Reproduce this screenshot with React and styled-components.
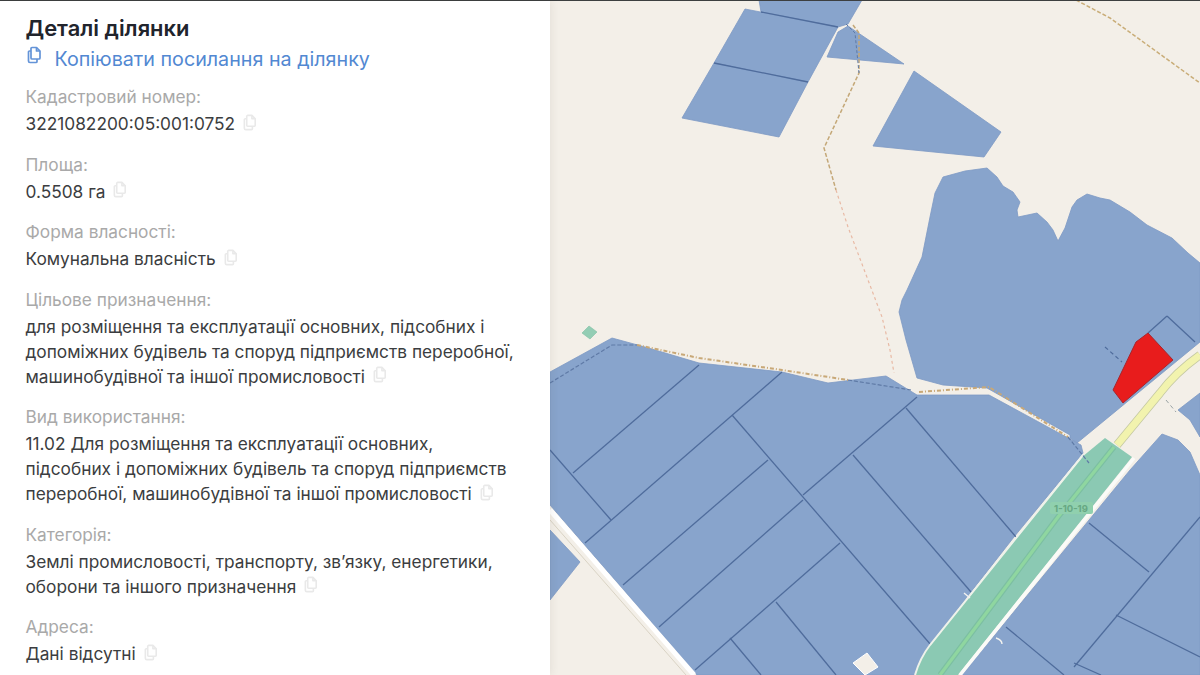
import React from 'react'
import styled, { createGlobalStyle } from 'styled-components'

const GlobalStyle = createGlobalStyle`
  html, body {
    margin: 0;
    padding: 0;
    background: #fff;
  }
  body {
    font-family: Inter, "Noto Sans", sans-serif;
  }
`

const Page = styled.div`
  width: 1200px;
  height: 675px;
  display: flex;
  flex-direction: column;
  overflow: hidden;
`

const TopRule = styled.div`
  height: 1px;
  flex: none;
  background: #3c3f40;
`

const Body = styled.div`
  flex: 1;
  min-height: 0;
  display: flex;
`

const Panel = styled.aside`
  width: 550px;
  flex: none;
  box-sizing: border-box;
  padding: 14px 20px 0 25.5px;
  background: #fff;
  overflow: hidden;
  position: relative;
  box-shadow: 0 0 9px rgba(60, 50, 40, 0.1);
`

const Title = styled.h1`
  margin: 0 0 5px;
  font-size: 21.9px;
  line-height: 26px;
  font-weight: 600;
  color: #21242c;
`

const CopyLink = styled.a`
  display: flex;
  align-items: flex-start;
  gap: 11px;
  margin-bottom: 12px;
  font-size: 19.7px;
  line-height: 26px;
  color: #5288d2;
`

const Group = styled.div`
  margin-bottom: 15.5px;
`

const Label = styled.div`
  margin-bottom: 2px;
  font-size: 17.3px;
  line-height: 25px;
  color: #a9a9a9;
`

const Value = styled.div`
  font-size: 17.3px;
  line-height: 25px;
  color: #3b3d40;
  white-space: nowrap;
`

const Map = styled.main`
  flex: 1;
  background: #f3efe8;
  overflow: hidden;

  svg {
    display: block;
  }
`

const CopyGlyph = styled.svg`
  flex: none;
  display: inline-block;
  vertical-align: ${(p) => (p.$link ? '0' : 'middle')};
  margin: ${(p) => (p.$link ? '0' : '-9px 0 -3px 7px')};
  color: ${(p) => (p.$link ? '#6494d8' : '#e9e9e9')};
`

const CopyIcon = ({ link }) => (
  <CopyGlyph
    $link={link}
    width={link ? 18 : 17}
    height={link ? 18 : 17}
    viewBox="0 0 18 18"
    fill="none"
    stroke="currentColor"
    strokeWidth="1.7"
    strokeLinejoin="round"
  >
    <path d="M6 1.5h4.5L14 5v7a1 1 0 0 1-1 1H6a1 1 0 0 1-1-1V2.5a1 1 0 0 1 1-1Z" />
    <path d="M10.5 1.5V5H14" />
    <path d="M5 5H3.5a1 1 0 0 0-1 1v9a1.5 1.5 0 0 0 1.5 1.5h6a1 1 0 0 0 1-1V13" />
  </CopyGlyph>
)

const details = [
  { label: 'Кадастровий номер:', lines: ['3221082200:05:001:0752'] },
  { label: 'Площа:', lines: ['0.5508 га'] },
  { label: 'Форма власності:', lines: ['Комунальна власність'] },
  {
    label: 'Цільове призначення:',
    lines: [
      'для розміщення та експлуатації основних, підсобних і',
      'допоміжних будівель та споруд підприємств переробної,',
      'машинобудівної та іншої промисловості',
    ],
  },
  {
    label: 'Вид використання:',
    lines: [
      '11.02 Для розміщення та експлуатації основних,',
      'підсобних і допоміжних будівель та споруд підприємств',
      'переробної, машинобудівної та іншої промисловості',
    ],
  },
  {
    label: 'Категорія:',
    lines: [
      'Землі промисловості, транспорту, зв’язку, енергетики,',
      'оборони та іншого призначення',
    ],
  },
  { label: 'Адреса:', lines: ['Дані відсутні'] },
]

const BLUE = '#88a4cc'
const LINE = '#4f6c9c'

const parcels = [
  '759,0 862,0 848,24 838,27 761,12',
  '745,9 838,27 808,82 714,63',
  '714,63 808,82 779,137 682,118',
  '848,26 904,64 827,57 838,32',
  '914,71 1001,132 984,157 873,146',
  // the lake shaped field
  '943,177 965,171 987,168 997,177 1003,186 1013,192 1020,202 1017,210 1018,217 1037,213 1047,222 1053,230 1058,241 1065,228 1072,207 1077,200 1087,194 1100,198 1110,200 1130,212 1147,225 1172,238 1188,253 1200,263 1200,342 1077,443 1070,438 1070,435 987,388 943,385 917,378 906,340 899,312 902,300 907,290 922,257 930,217 935,193',
  // big block under the track
  '550,372 612,338 645,347 699,363 782,372 828,383 886,376 917,395 989,395 1081,445 1083,453 1014,537 971,592 931,645 917,670 915,675 697,675 550,505',
  '550,530 580,562 550,600',
  // right of the road
  '1130,470 1162,434 1178,440 1190,452 1200,475 1200,675 962,675',
  '1178,410 1200,393 1200,437 1190,420',
]

const lots = [
  [699, 365, 573, 473],
  [782, 372, 585, 543],
  [768, 460, 623, 585],
  [917, 397, 803, 495],
  [803, 500, 659, 627],
  [840, 543, 695, 670],
  [550, 450, 611, 520],
  [732, 415, 931, 645],
  [853, 455, 971, 592],
  [906, 408, 1016, 537],
  [776, 602, 836, 675],
  [730, 638, 761, 675],
  [1006, 627, 1064, 675],
  [1089, 523, 1149, 572],
  [1200, 517, 1074, 667],
  [1116, 615, 1200, 657],
  [1074, 663, 1101, 675],
  [761, 12, 838, 27],
  [714, 63, 808, 82],
  [1148, 333, 1167, 316],
  [1167, 316, 1195, 342],
]

const ParcelMap = () => (
  <svg width="650" height="674" viewBox="550 1 650 674">
    {parcels.map((points) => (
      <polygon key={points} points={points} fill={BLUE} stroke="#7d99c4" strokeWidth="0.8" strokeLinejoin="round" />
    ))}
    {lots.map(([x1, y1, x2, y2]) => (
      <line key={`${x1}-${y1}`} x1={x1} y1={y1} x2={x2} y2={y2} stroke={LINE} strokeWidth="1.3" />
    ))}

    {/* white road edge, lower left */}
    <line x1="550" y1="510" x2="694" y2="675" stroke="#fff" strokeWidth="5" />
    <line x1="550" y1="520" x2="686" y2="675" stroke="#d9d3c4" strokeWidth="1" />
    <polygon points="853,663 867,653 878,667 865,675" fill="#f3efe8" stroke="#fff" strokeWidth="1" />
    <polygon points="589,326 597,332 590,339 582,333" fill="#93cdb4" stroke="#7fbfa3" strokeWidth="0.6" />

    {/* road, green strip and carriageway */}
    <path d="M1105 438 L1132 457 L958 675 L915 675 Q920 658 930 645 L1082 457 Z" fill="#8bc9b3" />
    <path d="M1083 455 L930 645 Q920 658 915 675" fill="none" stroke="#eef2ea" strokeWidth="2" />
    <path d="M1134 458 L960 675" fill="none" stroke="#fbfbf8" strokeWidth="3.5" />
    <path d="M1114 447 L1058 517 L940 675" fill="none" stroke="#7cbfa2" strokeWidth="5.5" />
    <path d="M1114 447 L1058 517 L940 675" fill="none" stroke="#8fd6a0" strokeWidth="3.2" />
    <path d="M1117 445 L1160 393 Q1176 372 1200 355" fill="none" stroke="#c4c8a2" strokeWidth="8.5" />
    <path d="M1117 445 L1160 393 Q1176 372 1200 355" fill="none" stroke="#f2f3ae" strokeWidth="7" />
    <path d="M1166 400 L1176 412" fill="none" stroke="#9aa3a4" strokeWidth="1" strokeDasharray="4 3" />

    <polygon points="1148,333 1173,360 1123,403 1113,390 1136,342" fill="#e81c1c" stroke="#a8262c" strokeWidth="1" />
    <line x1="1105" y1="347" x2="1122" y2="362" stroke={LINE} strokeWidth="1.2" strokeDasharray="4 3" />

    {/* tracks */}
    <path d="M853 25 L859 33 L859 73 L824 148 L836 190" fill="none" stroke="#c4a878" strokeWidth="1.5" strokeDasharray="4 2" />
    <path d="M836 190 L848 227 L882 317 L890 350 L894 373" fill="none" stroke="#e8b9a4" strokeWidth="1.2" strokeDasharray="3 3" />
    <path d="M1076 0 L1110 18 L1200 83" fill="none" stroke="#c9ad78" strokeWidth="1.5" strokeDasharray="4 2" />
    <path d="M550 383 L612 345 L637 345" fill="none" stroke="#5f7aa6" strokeWidth="1.2" strokeDasharray="4 2" />
    <path d="M637 345 L699 358 L782 370 L848 380" fill="none" stroke="#c8a877" strokeWidth="2" strokeDasharray="4 2 1 2" />
    <path d="M848 380 L911 390" fill="none" stroke="#5f7aa6" strokeWidth="1.2" strokeDasharray="4 2" />
    <path d="M919 392 L989 387 L1068 437" fill="none" stroke="#c8a877" strokeWidth="2" strokeDasharray="4 2 1 2" />
    <path d="M1068 437 L1089 463" fill="none" stroke="#5f7aa6" strokeWidth="1.2" strokeDasharray="4 2" />
    <path d="M846 24 L855 33 L859 73" fill="none" stroke="#5f7aa6" strokeWidth="1" strokeDasharray="3 2" />

    {/* small ticks where lots meet the strip */}
    <path d="M964 593 L970 598" fill="none" stroke="#f3f3f0" strokeWidth="1.4" />
    <path d="M996 638 Q1002 640 1002 644" fill="none" stroke="#f3f3f0" strokeWidth="1.4" />

    <rect x="1050" y="502" width="43" height="12" rx="2" fill="#90d0ae" />
    <text x="1071" y="511.5" fontFamily="Inter, sans-serif" fontSize="9.5" fontWeight="700" fill="#67a883" textAnchor="middle">
      1-10-19
    </text>
  </svg>
)

const App = () => (
  <Page>
    <GlobalStyle />
    <TopRule />
    <Body>
      <Panel>
        <Title>Деталі ділянки</Title>
        <CopyLink>
          <CopyIcon link />
          Копіювати посилання на ділянку
        </CopyLink>
        {details.map((item) => (
          <Group key={item.label}>
            <Label>{item.label}</Label>
            {item.lines.map((line, i) => (
              <Value key={line}>
                {line}
                {i === item.lines.length - 1 && <CopyIcon />}
              </Value>
            ))}
          </Group>
        ))}
      </Panel>
      <Map>
        <ParcelMap />
      </Map>
    </Body>
  </Page>
)

export default App
